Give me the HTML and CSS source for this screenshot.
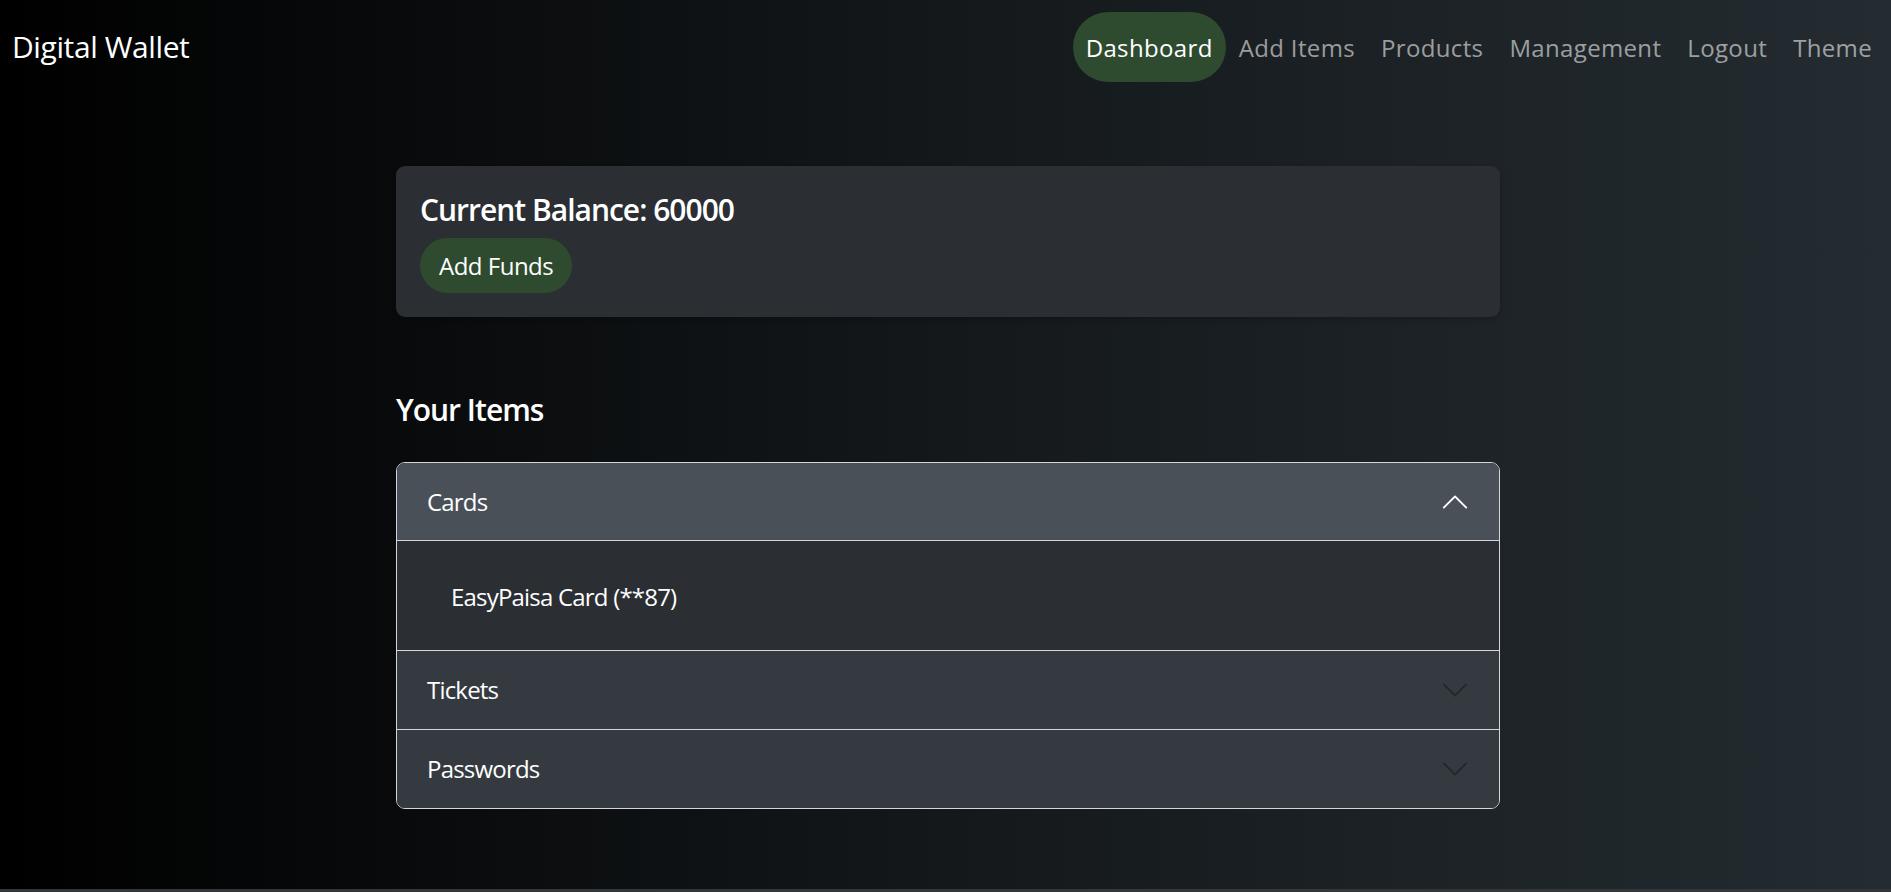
FILE: index.html
```html
<!DOCTYPE html>
<html lang="en">
<head>
<meta charset="utf-8">
<title>Digital Wallet</title>
<link rel="stylesheet" href="styles.css">
</head>
<body>
<nav class="navbar">
  <a class="brand" href="#">Digital Wallet</a>
  <ul class="nav">
    <li><a class="nav-link active" href="#">Dashboard</a></li>
    <li><a class="nav-link" href="#">Add Items</a></li>
    <li><a class="nav-link" href="#">Products</a></li>
    <li><a class="nav-link" href="#">Management</a></li>
    <li><a class="nav-link" href="#">Logout</a></li>
    <li><a class="nav-link" href="#">Theme</a></li>
  </ul>
</nav>

<main class="main">
  <div class="content">
    <section class="balance-card">
      <h2 class="balance-title">Current Balance: 60000</h2>
      <button class="btn-pill" type="button">Add Funds</button>
    </section>

    <h2 class="section-title">Your Items</h2>

    <div class="accordion">
      <div class="acc-item">
        <button class="acc-header open" type="button">
          <span>Cards</span>
          <svg class="chev" viewBox="0 0 16 16"><path d="M1.646 4.646a.5.5 0 0 1 .708 0L8 10.293l5.646-5.647a.5.5 0 0 1 .708.708l-6 6a.5.5 0 0 1-.708 0l-6-6a.5.5 0 0 1 0-.708z"/></svg>
        </button>
        <div class="acc-body">
          <ul class="item-list">
            <li class="item">EasyPaisa Card (**87)</li>
          </ul>
        </div>
      </div>
      <div class="acc-item">
        <button class="acc-header" type="button">
          <span>Tickets</span>
          <svg class="chev" viewBox="0 0 16 16"><path d="M1.646 4.646a.5.5 0 0 1 .708 0L8 10.293l5.646-5.647a.5.5 0 0 1 .708.708l-6 6a.5.5 0 0 1-.708 0l-6-6a.5.5 0 0 1 0-.708z"/></svg>
        </button>
      </div>
      <div class="acc-item">
        <button class="acc-header" type="button">
          <span>Passwords</span>
          <svg class="chev" viewBox="0 0 16 16"><path d="M1.646 4.646a.5.5 0 0 1 .708 0L8 10.293l5.646-5.647a.5.5 0 0 1 .708.708l-6 6a.5.5 0 0 1-.708 0l-6-6a.5.5 0 0 1 0-.708z"/></svg>
        </button>
      </div>
    </div>
  </div>
</main>
<div class="bottom-edge"></div>
</body>
</html>
```

FILE: styles.css
```css
* { box-sizing: border-box; }

html, body { height: 100%; }

body {
  margin: 0;
  min-height: 100vh;
  display: flex;
  flex-direction: column;
  font-family: "Open Sans", "Noto Sans", Arial, sans-serif;
  font-size: 24px;
  line-height: 36px;
  color: #fff;
  background: linear-gradient(to right, #000000 0%, #14181b 50%, #242c31 100%);
}

.navbar {
  display: flex;
  align-items: center;
  justify-content: space-between;
  padding: 12px 6px 0 12px;
}

.brand {
  font-size: 30px;
  line-height: 36px;
  letter-spacing: -0.4px;
  color: #fff;
  text-decoration: none;
}

.nav {
  display: flex;
  list-style: none;
  margin: 0;
  padding: 0;
}

.nav-link {
  display: block;
  height: 70px;
  padding: 17.5px 13px 16.5px;
  font-size: 24px;
  line-height: 36px;
  letter-spacing: 0.35px;
  color: rgba(255, 255, 255, 0.56);
  text-decoration: none;
  border-radius: 40px;
}

.nav-link.active {
  color: #fff;
  background: #2e4b30;
}

.main {
  flex: 1;
}

.content {
  width: 1109px;
  margin: 84px auto 0;
  padding-left: 5px;
}

.balance-card {
  background: #2b2e33;
  border-radius: 9px;
  padding: 24px;
  box-shadow: 0 3px 6px rgba(0, 0, 0, 0.18);
}

.balance-title,
.section-title {
  margin: 2px 0 10px;
  font-size: 30px;
  line-height: 36px;
  font-weight: 600;
  letter-spacing: -1px;
}

.btn-pill {
  display: inline-block;
  border: none;
  border-radius: 40px;
  padding: 10px 19px 9px;
  background: #2e4b30;
  color: #fff;
  font-family: inherit;
  font-size: 24px;
  line-height: 36px;
  letter-spacing: -0.5px;
  cursor: pointer;
}

.section-title {
  margin: 75px 0 34px;
}

.accordion {
  border: 1px solid #d3d6da;
  border-radius: 9px;
  overflow: hidden;
}

.acc-item + .acc-item {
  border-top: 1px solid #d3d6da;
}

.acc-header {
  width: 100%;
  display: flex;
  align-items: center;
  justify-content: space-between;
  border: none;
  padding: 21px 29px 21px 30px;
  background: #353a40;
  color: #fff;
  font-family: inherit;
  font-size: 24px;
  line-height: 36px;
  letter-spacing: -0.8px;
  text-align: left;
  cursor: pointer;
}

.acc-header.open {
  padding-bottom: 20px;
  background: #4a5058;
  border-bottom: 1px solid #d3d6da;
}

.chev {
  width: 30px;
  height: 30px;
  fill: #23272b;
}

.acc-header.open .chev {
  fill: #fff;
  transform: rotate(180deg);
}

.acc-body {
  background: #2b2e33;
  padding: 24px 30px 25px;
}

.item-list {
  list-style: none;
  margin: 0;
  padding: 0;
}

.item {
  padding: 14px 24px 10px;
  letter-spacing: -0.8px;
}

.bottom-edge {
  height: 3px;
  background: #34373a;
}
```
